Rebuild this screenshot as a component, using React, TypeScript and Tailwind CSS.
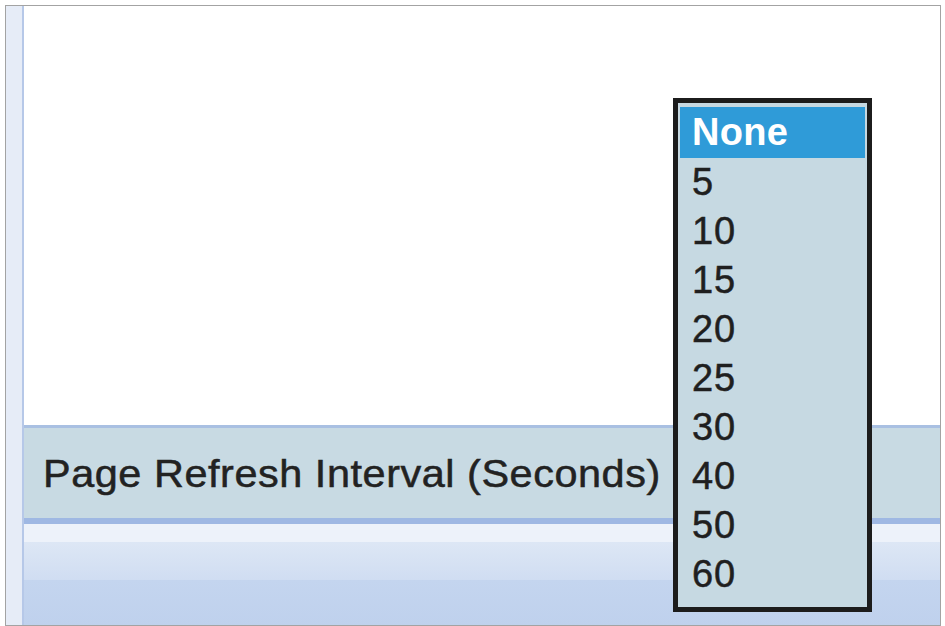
import React from "react";

const intervals = ["None", "5", "10", "15", "20", "25", "30", "40", "50", "60"];

const RefreshDropdown = ({ selected }: { selected: string }) => {
  return (
    <div className="absolute left-[673px] top-[98px] w-[199px] h-[514px] border-[5px] border-[#1c1c1c] bg-[#c6d9e2] px-[2px] pt-[4px]">
      {intervals.map((item) =>
        item === selected ? (
          <div
            key={item}
            className="h-[51px] leading-[51px] pl-[12px] bg-[#2f9bd8] text-white font-bold text-[38px] tracking-[0.3px]"
          >
            {item}
          </div>
        ) : (
          <div
            key={item}
            className="h-[49px] leading-[49px] pl-[12px] text-[#1f1f1f] text-[38px] tracking-[0.8px] [-webkit-text-stroke:0.5px_#1f1f1f]"
          >
            {item}
          </div>
        )
      )}
    </div>
  );
};

export default function App() {
  return (
    <div
      className="relative w-[945px] h-[626px] bg-white pt-[5px] pl-[5px] overflow-hidden"
      style={{ fontFamily: '"Liberation Sans", Arial, sans-serif' }}
    >
      <div className="flex w-[936px] h-[621px] border border-[#a3a3a3]">
        {/* left rail */}
        <div className="w-[18px] shrink-0 bg-[#e6ecf7] border-r-2 border-[#b6c8e8]" />

        <div className="flex flex-col flex-1">
          <div className="h-[419px] bg-white" />
          <div className="h-[3px] bg-[#a9c0e2]" />
          <div className="h-[90px] bg-[#c8dae3] pl-[19px] pt-[27px]">
            <span className="inline-block origin-left scale-x-[1.09] text-[38px] leading-none tracking-[0.5px] text-[#222] [-webkit-text-stroke:0.5px_#222]">
              Page Refresh Interval (Seconds)
            </span>
          </div>
          <div className="h-[6px] bg-[#9fb8e3]" />
          <div className="h-[18px] bg-[#edf2fa]" />
          <div className="h-[38px] bg-gradient-to-b from-[#dde7f5] to-[#d0ddf2]" />
          <div className="flex-1 bg-gradient-to-b from-[#c4d5ef] to-[#bfd1ed]" />
        </div>
      </div>

      <RefreshDropdown selected="None" />
    </div>
  );
}
